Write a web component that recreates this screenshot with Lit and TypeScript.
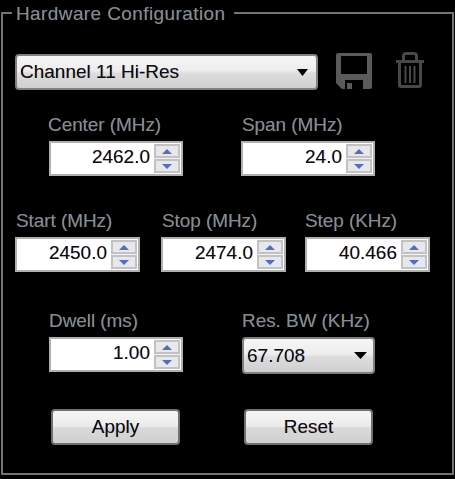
import { LitElement, html, css } from "lit";
import { customElement } from "lit/decorators.js";

@customElement("app-root")
export class AppRoot extends LitElement {
  static styles = css`
    :host {
      display: block;
      width: 455px;
      height: 479px;
      background: #000;
      overflow: hidden;
      font-family: "Liberation Sans", Arial, sans-serif;
      font-size: 19px;
      color: #000;
    }
    .frame {
      margin: 3px 1px 0;
      height: 472px;
      box-sizing: border-box;
      border: 2px solid #747474;
      padding: 0 0 0 12px;
      min-width: 0;
      filter: blur(0.45px);
    }
    legend {
      margin-left: -3px;
      padding: 0 9px 0 4px;
      height: 20px;
      line-height: 22px;
      letter-spacing: 0.4px;
      color: #848b93;
      white-space: nowrap;
      text-shadow: -0.5px 0 rgba(40, 80, 160, 0.4), 0.5px 0 rgba(160, 100, 30, 0.4);
    }
    .top {
      display: flex;
      align-items: flex-start;
      margin-top: 31px;
    }
    .row {
      display: flex;
      align-items: flex-start;
    }
    .center { margin-top: 25px; margin-left: 34px; gap: 58px; }
    .range { margin-top: 35px; gap: 21px; }
    .range .field + .field + .field { margin-left: -2px; }
    .dwell { margin-top: 39px; margin-left: 34px; gap: 59px; }
    .actions { margin-top: 35px; margin-left: 36px; gap: 64px; }
    .field { display: flex; flex-direction: column; gap: 6px; }
    .label {
      height: 20px;
      line-height: 19px;
      letter-spacing: -0.08px;
      color: #848b93;
      white-space: nowrap;
      text-shadow: -0.5px 0 rgba(40, 80, 160, 0.4), 0.5px 0 rgba(160, 100, 30, 0.4);
    }
    .nudge-back { margin-left: -1px; }
    .nudge { margin-left: 1px; }
    .spin {
      display: flex;
      align-items: center;
      box-sizing: border-box;
      height: 35px;
      background: #fff;
      border: 2px solid #b0b0b0;
      padding-right: 1px;
    }
    .w134 { width: 134px; }
    .w125 { width: 125px; }
    .value {
      flex: 1;
      text-align: right;
      line-height: 27px;
      height: 31px;
      padding-right: 4px;
      color: #0c0c14;
      text-shadow: -0.6px 0 rgba(230, 130, 20, 0.4), 0.6px 0 rgba(20, 90, 220, 0.4);
    }
    .arrows {
      width: 26px;
      display: flex;
      flex-direction: column;
      gap: 1px;
      background: #f2f2f2;
    }
    .arrow {
      height: 14px;
      box-sizing: border-box;
      background: #e6e8ee;
      border: 2px solid #c2c2c2;
      display: flex;
      align-items: center;
      justify-content: center;
    }
    .tri { display: block; width: 10px; height: 5px; }
    .tri path { fill: #5a6cb8; }
    .select {
      display: flex;
      align-items: center;
      justify-content: space-between;
      box-sizing: border-box;
      height: 36px;
      border: 2px solid #808080;
      border-radius: 4px;
      background: linear-gradient(#f6f6f6 0%, #ededed 46%, #dddddd 54%, #d0d0d0 100%);
      padding: 0 8px 0 3px;
      color: #0c0c14;
      text-shadow: -0.6px 0 rgba(230, 130, 20, 0.4), 0.6px 0 rgba(20, 90, 220, 0.4);
    }
    .main { width: 303px; }
    .res { width: 133px; height: 37px; padding-right: 6px; }
    .caret { display: block; width: 11px; height: 7px; }
    .res .caret { width: 13px; }
    .caret path { fill: #000; }
    .icon { display: block; }
    .save { margin: -1px 0 0 18px; width: 36px; height: 36px; }
    .trash { margin: -2px 0 0 23px; width: 30px; height: 36px; }
    .btn {
      width: 129px;
      height: 36px;
      box-sizing: border-box;
      display: flex;
      align-items: center;
      justify-content: center;
      border: 2px solid #707070;
      border-radius: 4px;
      background: linear-gradient(#f6f6f6 0%, #ececec 46%, #d9d9d9 54%, #d0d0d0 100%);
      color: #0c0c14;
      text-shadow: -0.6px 0 rgba(230, 130, 20, 0.4), 0.6px 0 rgba(20, 90, 220, 0.4);
    }
  `;

  private spin(label: string, value: string, w: string, nudge = "") {
    return html`<div class="field">
      <div class="label ${nudge}">${label}</div>
      <div class="spin ${w}">
        <div class="value">${value}</div>
        <div class="arrows">
          <div class="arrow"><svg class="tri" viewBox="0 0 12 6"><path d="M6 0 12 6H0Z"></path></svg></div>
          <div class="arrow"><svg class="tri" viewBox="0 0 12 6"><path d="M0 0H12L6 6Z"></path></svg></div>
        </div>
      </div>
    </div>`;
  }

  private caret() {
    return html`<svg class="caret" viewBox="0 0 14 8" preserveAspectRatio="none"><path d="M0 0H14L7 8Z"></path></svg>`;
  }

  render() {
    return html`
      <fieldset class="frame">
        <legend>Hardware Configuration</legend>
        <div class="top">
          <div class="select main"><span>Channel 11 Hi-Res</span>${this.caret()}</div>
          <svg class="icon save" viewBox="0 0 36 36">
            <path fill="#5a5a5a" fill-rule="evenodd" d="M2 0H34Q36 0 36 2V34Q36 36 34 36H27V27H9V36H6L0 30V2Q0 0 2 0ZM5 3V21H31V3Z"></path>
            <rect x="11" y="30" width="5" height="6" fill="#5a5a5a"></rect>
          </svg>
          <svg class="icon trash" viewBox="0 0 30 36">
            <path fill="none" stroke="#484848" stroke-width="3" d="M1 9.500H29M8.500 8V4Q8.500 1.500 11 1.500H19Q21.500 1.500 21.500 4V8"></path>
            <path fill="none" stroke="#484848" stroke-width="3" d="M4.500 10V33Q4.500 34.500 6 34.500H24Q25.500 34.500 25.500 33V10"></path>
            <path fill="none" stroke="#484848" stroke-width="2" d="M10.500 14V31M15 14V31M19.500 14V31"></path>
          </svg>
        </div>
        <div class="row center">
          ${this.spin("Center (MHz)", "2462.0", "w134", "nudge-back")}
          ${this.spin("Span (MHz)", "24.0", "w134", "nudge")}
        </div>
        <div class="row range">
          ${this.spin("Start (MHz)", "2450.0", "w125", "nudge")}
          ${this.spin("Stop (MHz)", "2474.0", "w125", "nudge")}
          ${this.spin("Step (KHz)", "40.466", "w125")}
        </div>
        <div class="row dwell">
          ${this.spin("Dwell (ms)", "1.00", "w134")}
          <div class="field">
            <div class="label">Res. BW (KHz)</div>
            <div class="select res"><span>67.708</span>${this.caret()}</div>
          </div>
        </div>
        <div class="row actions">
          <div class="btn">Apply</div>
          <div class="btn">Reset</div>
        </div>
      </fieldset>
    `;
  }
}
